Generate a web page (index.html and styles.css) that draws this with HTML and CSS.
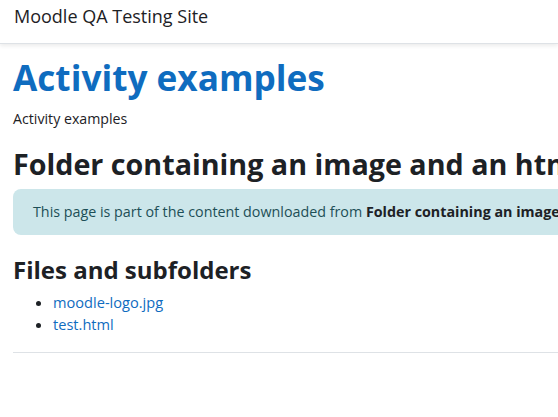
FILE: index.html
```html
<!DOCTYPE html>
<html>
<head>
<meta charset="utf-8">
<link rel="stylesheet" href="styles.css">
</head>
<body>
<nav class="navbar">
  <span class="brand">Moodle QA Testing Site</span>
</nav>
<main class="page">
  <h1 class="page-title">Activity examples</h1>
  <div class="breadcrumb">Activity examples</div>
  <h2 class="activity-title">Folder containing an image and an html file</h2>
  <div class="alert-info">This page is part of the content downloaded from <strong>Folder containing an image and an html file</strong> on 1 January 2024. Note that some content and any files larger than 500 KB are not downloaded.</div>
  <h3 class="section-title">Files and subfolders</h3>
  <ul class="files">
    <li><a href="#">moodle-logo.jpg</a></li>
    <li><a href="#">test.html</a></li>
  </ul>
  <hr class="divider">
</main>
</body>
</html>
```
FILE: styles.css
```css
html, body {
  margin: 0;
  padding: 0;
  background: #fff;
}
body {
  font-family: "Open Sans", "Noto Sans", sans-serif;
  font-size: 14.6px;
  line-height: 1.5;
  color: #1d2125;
  overflow: hidden;
}
.navbar {
  box-sizing: border-box;
  height: 44px;
  display: flex;
  align-items: flex-start;
  padding: 3px 14px 0;
  background: #fff;
  border-bottom: 1px solid #dee2e6;
  box-shadow: 0 2px 4px rgba(0,0,0,0.08);
}
.brand {
  font-size: 18px;
  line-height: 27px;
  color: #1d2125;
  white-space: nowrap;
}
.page {
  padding: 0 0 0 13px;
  width: 900px;
}
.page-title {
  margin: 12px 0 0;
  font-size: 35.2px;
  font-weight: 700;
  line-height: 1.2;
  color: #0f6cbf;
  white-space: nowrap;
}
.breadcrumb {
  font-size: 14.2px;
  margin-top: 10px;
  white-space: nowrap;
}
.activity-title {
  margin: 17px 0 0;
  font-size: 28.7px;
  font-weight: 700;
  line-height: 1.2;
  white-space: nowrap;
}
.alert-info {
  margin-top: 8px;
  background: #cce6ea;
  color: #1d4f57;
  border-radius: 8px;
  padding: 12px 20px;
  font-size: 14.3px;
  line-height: 22px;
  white-space: nowrap;
  overflow: hidden;
}
.alert-info strong {
  color: #1d2125;
}
.section-title {
  margin: 21px 0 0;
  font-size: 24px;
  font-weight: 700;
  line-height: 1.2;
}
.files {
  margin: 7px 0 0;
  padding-left: 40px;
}
.files a {
  color: #0f6cbf;
  text-decoration: none;
}
.divider {
  margin: 16px 0 0;
  border: 0;
  border-top: 1px solid #dee2e6;
}
```
